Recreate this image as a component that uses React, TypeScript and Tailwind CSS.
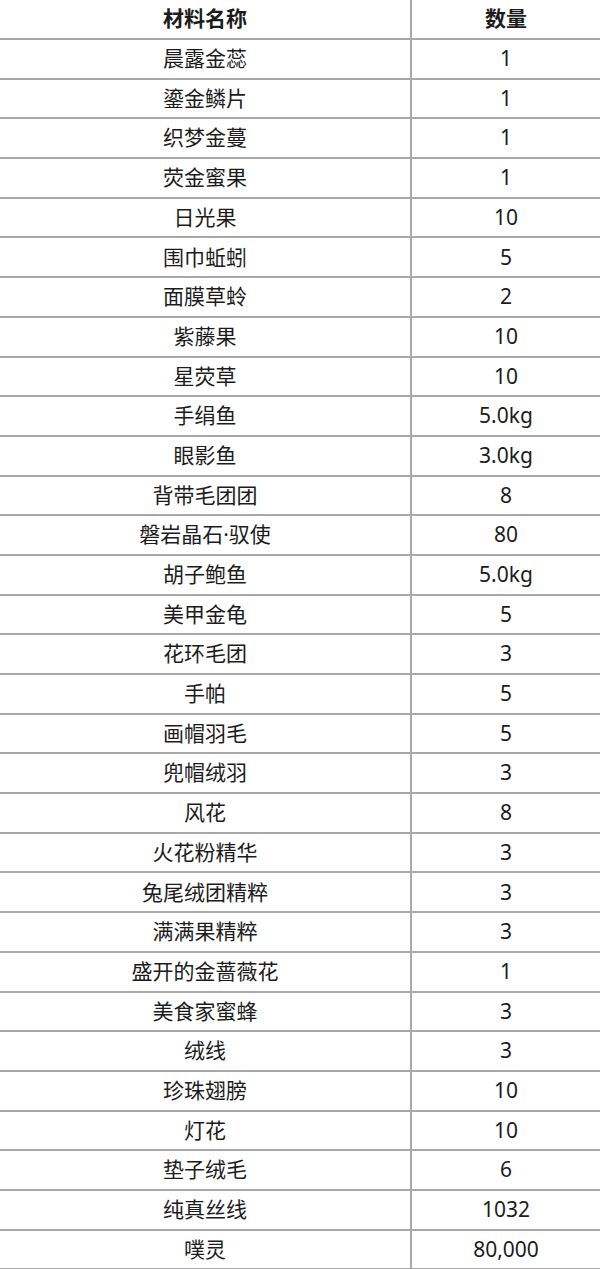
import React from "react";

const rows: [string, string][] = [
  ["晨露金蕊", "1"],
  ["鎏金鳞片", "1"],
  ["织梦金蔓", "1"],
  ["荧金蜜果", "1"],
  ["日光果", "10"],
  ["围巾蚯蚓", "5"],
  ["面膜草蛉", "2"],
  ["紫藤果", "10"],
  ["星荧草", "10"],
  ["手绢鱼", "5.0kg"],
  ["眼影鱼", "3.0kg"],
  ["背带毛团团", "8"],
  ["磐岩晶石·驭使", "80"],
  ["胡子鲍鱼", "5.0kg"],
  ["美甲金龟", "5"],
  ["花环毛团", "3"],
  ["手帕", "5"],
  ["画帽羽毛", "5"],
  ["兜帽绒羽", "3"],
  ["风花", "8"],
  ["火花粉精华", "3"],
  ["兔尾绒团精粹", "3"],
  ["满满果精粹", "3"],
  ["盛开的金蔷薇花", "1"],
  ["美食家蜜蜂", "3"],
  ["绒线", "3"],
  ["珍珠翅膀", "10"],
  ["灯花", "10"],
  ["垫子绒毛", "6"],
  ["纯真丝线", "1032"],
  ["噗灵", "80,000"],
];

export default function App() {
  return (
    <div
      className="w-[600px] h-[1269px] overflow-hidden bg-white text-[#1c1c1c] text-[21px]"
      style={{ fontFamily: '"Noto Sans", "Noto Sans CJK SC", sans-serif' }}
    >
      <div className="grid grid-cols-[412px_188px] h-[40px] border-b-2 border-[#a8a8a8] font-bold">
        <div className="flex items-center justify-center border-r-2 border-[#a8a8a8]">材料名称</div>
        <div className="flex items-center justify-center">数量</div>
      </div>
      {rows.map(([name, qty], i) => (
        <div
          key={i}
          className="grid grid-cols-[412px_188px] h-[39.7px] border-b-2 border-[#a8a8a8]"
        >
          <div className="flex items-center justify-center border-r-2 border-[#a8a8a8]">{name}</div>
          <div className="flex items-center justify-center">{qty}</div>
        </div>
      ))}
    </div>
  );
}
